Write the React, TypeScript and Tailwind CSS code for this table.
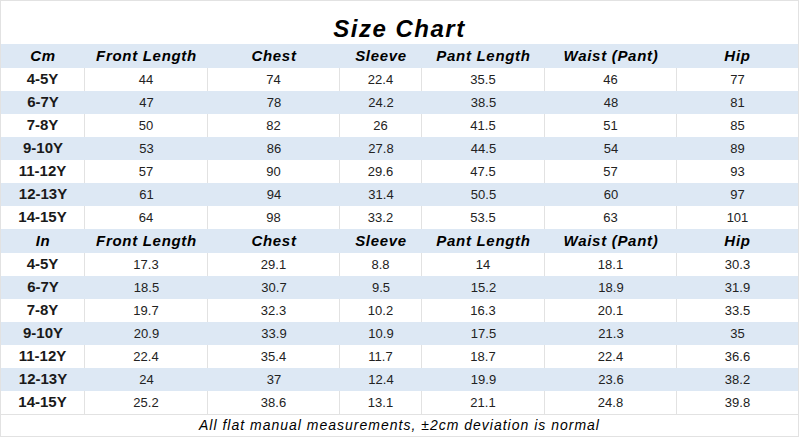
import React from 'react';

const COLS = 'grid grid-cols-[84px_123px_132px_82px_123px_132px_121px]';
const HEAD = ['Front Length', 'Chest', 'Sleeve', 'Pant Length', 'Waist (Pant)', 'Hip'];

const cmRows: string[][] = [
  ['4-5Y', '44', '74', '22.4', '35.5', '46', '77'],
  ['6-7Y', '47', '78', '24.2', '38.5', '48', '81'],
  ['7-8Y', '50', '82', '26', '41.5', '51', '85'],
  ['9-10Y', '53', '86', '27.8', '44.5', '54', '89'],
  ['11-12Y', '57', '90', '29.6', '47.5', '57', '93'],
  ['12-13Y', '61', '94', '31.4', '50.5', '60', '97'],
  ['14-15Y', '64', '98', '33.2', '53.5', '63', '101'],
];

const inRows: string[][] = [
  ['4-5Y', '17.3', '29.1', '8.8', '14', '18.1', '30.3'],
  ['6-7Y', '18.5', '30.7', '9.5', '15.2', '18.9', '31.9'],
  ['7-8Y', '19.7', '32.3', '10.2', '16.3', '20.1', '33.5'],
  ['9-10Y', '20.9', '33.9', '10.9', '17.5', '21.3', '35'],
  ['11-12Y', '22.4', '35.4', '11.7', '18.7', '22.4', '36.6'],
  ['12-13Y', '24', '37', '12.4', '19.9', '23.6', '38.2'],
  ['14-15Y', '25.2', '38.6', '13.1', '21.1', '24.8', '39.8'],
];

function HeaderRow({ unit }: { unit: string }) {
  return (
    <div className={`${COLS} h-[24px] bg-[#dde8f4] items-center text-center font-bold italic text-[15px] tracking-[0.7px] text-black`}>
      <div>{unit}</div>
      {HEAD.map(h => (
        <div key={h}>{h}</div>
      ))}
    </div>
  );
}

function DataRow({ row, blue }: { row: string[]; blue: boolean }) {
  return (
    <div
      className={`${COLS} h-[23px] items-stretch text-center text-[#222] ${
        blue ? 'bg-[#dde8f4]' : 'bg-white divide-x divide-[#e2e2e2]'
      }`}
    >
      {row.map((c, i) => (
        <div
          key={i}
          className={`flex items-center justify-center ${i === 0 ? 'text-[15px] font-semibold text-[#1a1a1a]' : 'text-[13px]'}`}
        >
          {c}
        </div>
      ))}
    </div>
  );
}

export default function App() {
  return (
    <div className="w-[800px] h-[438px] bg-white" style={{ fontFamily: '"Liberation Sans", Arial, sans-serif' }}>
      <div className="w-[799px] h-[437px] border border-[#e2e2e2] flex flex-col">
        <div className="h-[43px] flex items-end justify-center pb-[3px]">
          <span className="text-[24px] font-bold italic tracking-[1.5px] text-black leading-none">Size Chart</span>
        </div>
        <HeaderRow unit="Cm" />
        {cmRows.map((r, i) => (
          <DataRow key={'c' + i} row={r} blue={i % 2 === 1} />
        ))}
        <HeaderRow unit="In" />
        {inRows.map((r, i) => (
          <DataRow key={'i' + i} row={r} blue={i % 2 === 1} />
        ))}
        <div className="flex-1 border-t border-[#e2e2e2] flex items-center justify-center text-[14px] italic tracking-[1px] text-black">
          All flat manual measurements, ±2cm deviation is normal
        </div>
      </div>
    </div>
  );
}
